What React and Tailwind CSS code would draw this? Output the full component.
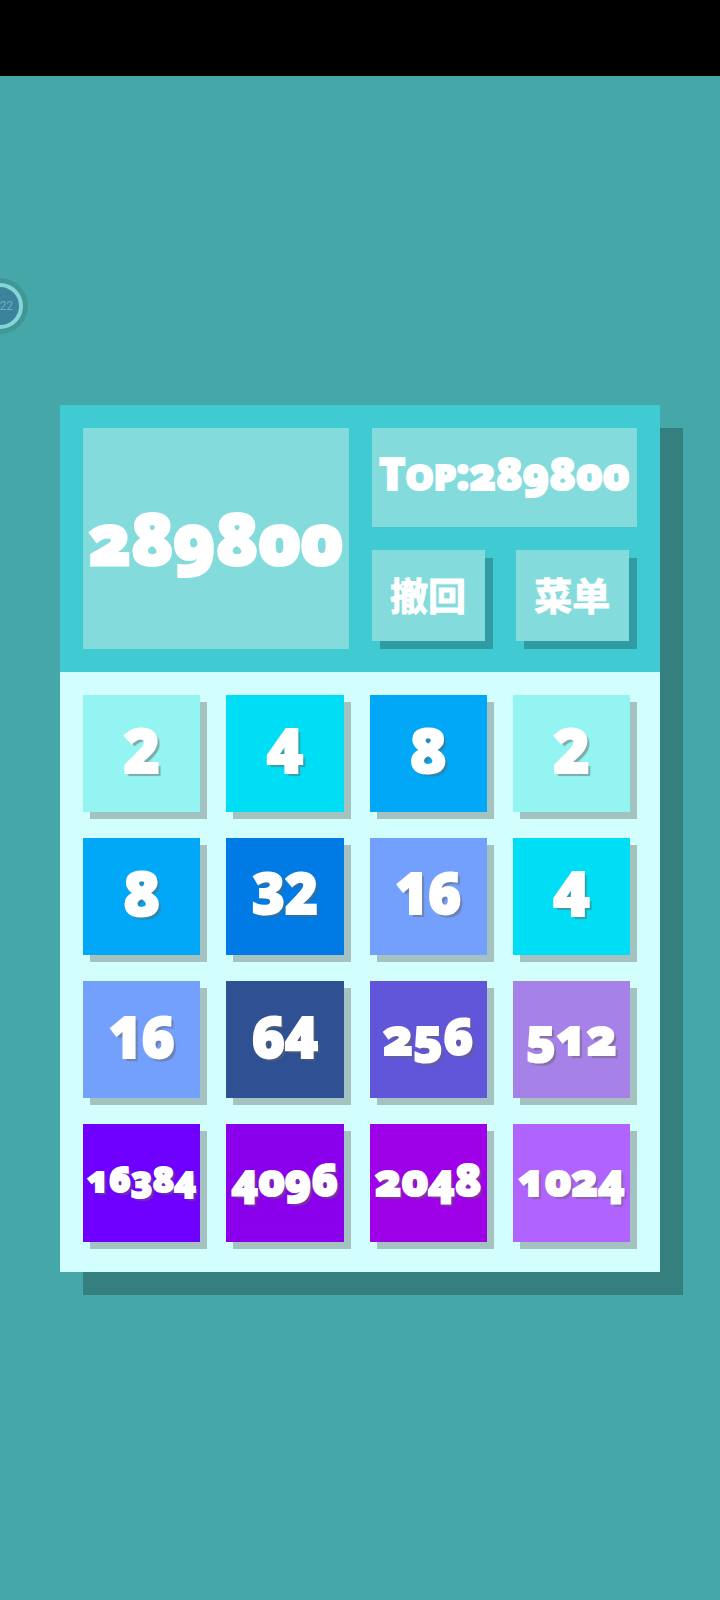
import React from "react";
import { useState } from "react";

// tile colour and digit style for every value
const tileStyles = {
  2: "bg-[#94f4f2] text-[62px]",
  4: "bg-[#00def6] text-[62px]",
  8: "bg-[#00a8f7] text-[62px]",
  16: "bg-[#739ffd] text-[56px]",
  32: "bg-[#007ae4] text-[56px]",
  64: "bg-[#2f5092] text-[56px]",
  256: "bg-[#6156da] text-[50px] [font-variant-numeric:oldstyle-nums]",
  512: "bg-[#a681e8] text-[50px] [font-variant-numeric:oldstyle-nums]",
  1024: "bg-[#b063ff] text-[44px] [font-variant-numeric:oldstyle-nums]",
  2048: "bg-[#9e00e8] text-[44px] [font-variant-numeric:oldstyle-nums]",
  4096: "bg-[#8a00ec] text-[44px] [font-variant-numeric:oldstyle-nums]",
  16384: "bg-[#6f00ff] text-[36px] [font-variant-numeric:oldstyle-nums]",
};

const startCells = [
  2, 4, 8, 2,
  8, 32, 16, 4,
  16, 64, 256, 512,
  16384, 4096, 2048, 1024,
];

const Tile = ({ value }) => (
  <div
    className={`flex aspect-square min-w-0 items-center justify-center pb-2 leading-none shadow-[7px_7px_0_#a4c2c0] [-webkit-text-stroke:2px_white] ${tileStyles[value]}`}
  >
    <span className="[text-shadow:3px_3px_1px_rgba(100,100,100,0.5)]">{value}</span>
  </div>
);

const GameButton = ({ text, onClick }) => (
  <button
    onClick={onClick}
    className="h-[91px] cursor-pointer bg-[#84dbdc] pb-0.5 font-['Noto_Sans_CJK_SC',sans-serif] text-[38px] leading-none font-bold shadow-[8px_8px_0_#309ba2] [-webkit-text-stroke:1px_white]"
  >
    {text}
  </button>
);

// Floating bubble docked to the left edge
const FloatingBubble = () => (
  <div className="absolute top-[278px] -left-7 size-14 rounded-full bg-[#419796] p-[5px]">
    <div className="flex size-full items-center justify-end rounded-full border-4 border-[#83d5d8] bg-[#3b829b] pr-1.5 font-['Roboto',sans-serif] text-xs font-normal text-[#70adb9]">
      22
    </div>
  </div>
);

const App = () => {
  const [cells] = useState(startCells);
  const [isMenuOpen, setIsMenuOpen] = useState(false);

  return (
    <div className="relative flex min-h-screen flex-col overflow-hidden bg-[#45a7a7] font-['Open_Sans',sans-serif] font-extrabold text-white">
      <div className="h-[76px] bg-black" />
      <FloatingBubble />

      <main className="flex flex-1 items-center justify-center">
        <div className="w-10/12 shadow-[23px_23px_0_#35807f]">
          {/* Score, best score and controls */}
          <header className="grid grid-cols-2 gap-[23px] bg-[#40cbd2] p-[23px]">
            <div className="flex min-w-0 items-center justify-center bg-[#84dbdc] text-[70px] leading-none [-webkit-text-stroke:3px_white] [font-variant-numeric:oldstyle-nums]">
              289800
            </div>
            <div className="flex min-w-0 flex-col gap-[23px] pb-2">
              <div className="flex h-[99px] items-center justify-center bg-[#84dbdc] pb-2">
                <p className="text-[44px] leading-none [-webkit-text-stroke:2px_white] [font-variant-numeric:oldstyle-nums]">
                  T<span className="text-[36px] uppercase">op</span>:289800
                </p>
              </div>
              <div className="grid grid-cols-2 gap-[31px] pr-2">
                <GameButton text="撤回" />
                <GameButton text="菜单" onClick={() => setIsMenuOpen(!isMenuOpen)} />
              </div>
            </div>
          </header>

          {/* Board */}
          <section className="grid grid-cols-4 gap-[26px] bg-[#d2fffe] pt-[23px] pr-[30px] pb-[30px] pl-[23px]">
            {cells.map((value, index) => (
              <Tile key={index} value={value} />
            ))}
          </section>
        </div>
      </main>
    </div>
  );
};

export default App;
